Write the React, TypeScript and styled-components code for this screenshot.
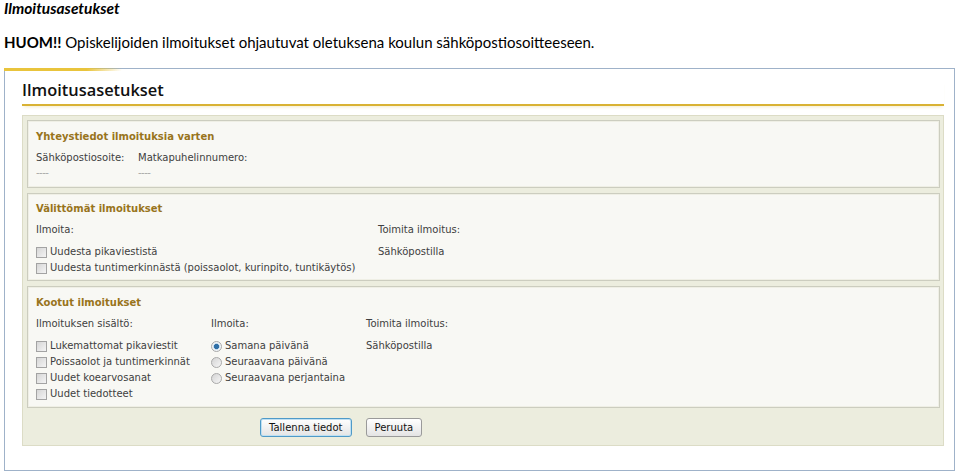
import React from "react"
import styled, { createGlobalStyle } from "styled-components"

const GlobalStyle = createGlobalStyle`
  body {
    margin: 0;
    background: #ffffff;
  }
`

const Page = styled.div`
  padding: 0 4px;
  font-family: "DejaVu Sans", Verdana, sans-serif;
`

const DocTitle = styled.div`
  font-family: Lato, "Liberation Sans", sans-serif;
  font-weight: 700;
  font-style: italic;
  font-size: 15.5px;
  line-height: 16px;
  color: #000;
`

const Notice = styled.div`
  font-family: Lato, "Liberation Sans", sans-serif;
  font-size: 15px;
  line-height: 20px;
  margin-top: 16px;
  color: #000;

  b {
    font-weight: 700;
  }
`

const Frame = styled.div`
  position: relative;
  margin-top: 16px;
  width: 951px;
  box-sizing: border-box;
  border: 1px solid #9fb2c9;
  padding: 11px 10px 24px 17px;
  background: #fff;

  &::before {
    content: "";
    position: absolute;
    left: -1px;
    top: -1px;
    width: 118px;
    height: 3px;
    background: linear-gradient(to right, #e9c43c 70%, rgba(233, 196, 60, 0));
  }
`

const Heading = styled.h1`
  margin: 0;
  font-family: "Open Sans", sans-serif;
  font-weight: 600;
  font-size: 16.4px;
  line-height: 20px;
  color: #111;
  padding-bottom: 4px;
  border-bottom: 2px solid #d9b234;
  box-shadow: 0 3px 3px -2px rgba(217, 178, 52, 0.25);
`

const OuterPanel = styled.div`
  margin-top: 9px;
  background: #ecedde;
  border: 1px solid #dcdcc6;
  padding: 4px 3px 0 4px;
`

const SubPanel = styled.div<{ $pt: number; $pb: number }>`
  background: #f8f8f4;
  border: 1px solid #cccdbf;
  box-shadow: inset 0 0 0 1px #efefe5;
  padding: ${(p) => p.$pt}px 8px ${(p) => p.$pb}px 8px;
  margin-bottom: 5px;
  color: #404040;
  font-size: 10px;
  line-height: 16px;
`

const SectionTitle = styled.div`
  font-weight: 700;
  color: #98741c;
  margin-bottom: 5px;
`

const Cols = styled.div<{ $cols: string }>`
  display: grid;
  grid-template-columns: ${(p) => p.$cols};
`

const Label = styled.div`
  white-space: nowrap;
`

const Empty = styled.div`
  color: #a8a8a8;
  letter-spacing: -0.5px;
  line-height: 13px;
`

const List = styled.div<{ $mt?: number }>`
  margin-top: ${(p) => p.$mt ?? 6}px;
`

const Option = styled.div`
  display: flex;
  align-items: center;
  gap: 3px;
  white-space: nowrap;
`

const Box = styled.span`
  width: 9px;
  height: 9px;
  border: 1px solid #a3a3a3;
  background: linear-gradient(135deg, #d6d6d6, #f4f4f4);
  flex: none;
`

const Radio = styled.span<{ $on?: boolean }>`
  width: 9px;
  height: 9px;
  border-radius: 50%;
  border: 1px solid #a9a9a9;
  background: ${(p) =>
    p.$on
      ? "radial-gradient(circle, #2f6fa6 0 2.3px, #9cc2e0 2.6px, #eef3f7 3.5px)"
      : "linear-gradient(135deg, #d4d4d4, #f6f6f6)"};
  flex: none;
`

const ButtonRow = styled.div`
  display: flex;
  gap: 14px;
  padding: 5px 0 8px 233px;
`

const Btn = styled.button<{ $focus?: boolean }>`
  font-family: "DejaVu Sans", Verdana, sans-serif;
  font-size: 10px;
  height: 19px;
  padding: 0 8px;
  color: #111;
  background: linear-gradient(#ffffff, #e4e4e4);
  border: 1px solid ${(p) => (p.$focus ? "#4f9ac8" : "#9a9a9a")};
  box-shadow: ${(p) => (p.$focus ? "inset 0 0 0 1px #bfe0f2" : "none")};
  border-radius: 3px;
`

const Check = ({ children }: { children: React.ReactNode }) => (
  <Option>
    <Box />
    {children}
  </Option>
)

const RadioOpt = ({ on, children }: { on?: boolean; children: React.ReactNode }) => (
  <Option>
    <Radio $on={on} />
    {children}
  </Option>
)

export default function App() {
  return (
    <Page>
      <GlobalStyle />
      <DocTitle>Ilmoitusasetukset</DocTitle>
      <Notice>
        <b>HUOM!!</b> Opiskelijoiden ilmoitukset ohjautuvat oletuksena koulun sähköpostiosoitteeseen.
      </Notice>
      <Frame>
        <Heading>Ilmoitusasetukset</Heading>
        <OuterPanel>
          <SubPanel $pt={8} $pb={8}>
            <SectionTitle>Yhteystiedot ilmoituksia varten</SectionTitle>
            <Cols $cols="102px 1fr">
              <div>
                <Label>Sähköpostiosoite:</Label>
                <Empty>----</Empty>
              </div>
              <div>
                <Label>Matkapuhelinnumero:</Label>
                <Empty>----</Empty>
              </div>
            </Cols>
          </SubPanel>

          <SubPanel $pt={7} $pb={4}>
            <SectionTitle>Välittömät ilmoitukset</SectionTitle>
            <Cols $cols="342px 1fr">
              <div>
                <Label>Ilmoita:</Label>
                <List>
                  <Check>Uudesta pikaviestistä</Check>
                  <Check>Uudesta tuntimerkinnästä (poissaolot, kurinpito, tuntikäytös)</Check>
                </List>
              </div>
              <div>
                <Label>Toimita ilmoitus:</Label>
                <List>Sähköpostilla</List>
              </div>
            </Cols>
          </SubPanel>

          <SubPanel $pt={8} $pb={5}>
            <SectionTitle>Kootut ilmoitukset</SectionTitle>
            <Cols $cols="175px 155px 1fr">
              <div>
                <Label>Ilmoituksen sisältö:</Label>
                <List $mt={6}>
                  <Check>Lukemattomat pikaviestit</Check>
                  <Check>Poissaolot ja tuntimerkinnät</Check>
                  <Check>Uudet koearvosanat</Check>
                  <Check>Uudet tiedotteet</Check>
                </List>
              </div>
              <div>
                <Label>Ilmoita:</Label>
                <List $mt={6}>
                  <RadioOpt on>Samana päivänä</RadioOpt>
                  <RadioOpt>Seuraavana päivänä</RadioOpt>
                  <RadioOpt>Seuraavana perjantaina</RadioOpt>
                </List>
              </div>
              <div>
                <Label>Toimita ilmoitus:</Label>
                <List $mt={6}>Sähköpostilla</List>
              </div>
            </Cols>
          </SubPanel>

          <ButtonRow>
            <Btn $focus>Tallenna tiedot</Btn>
            <Btn>Peruuta</Btn>
          </ButtonRow>
        </OuterPanel>
      </Frame>
    </Page>
  )
}
